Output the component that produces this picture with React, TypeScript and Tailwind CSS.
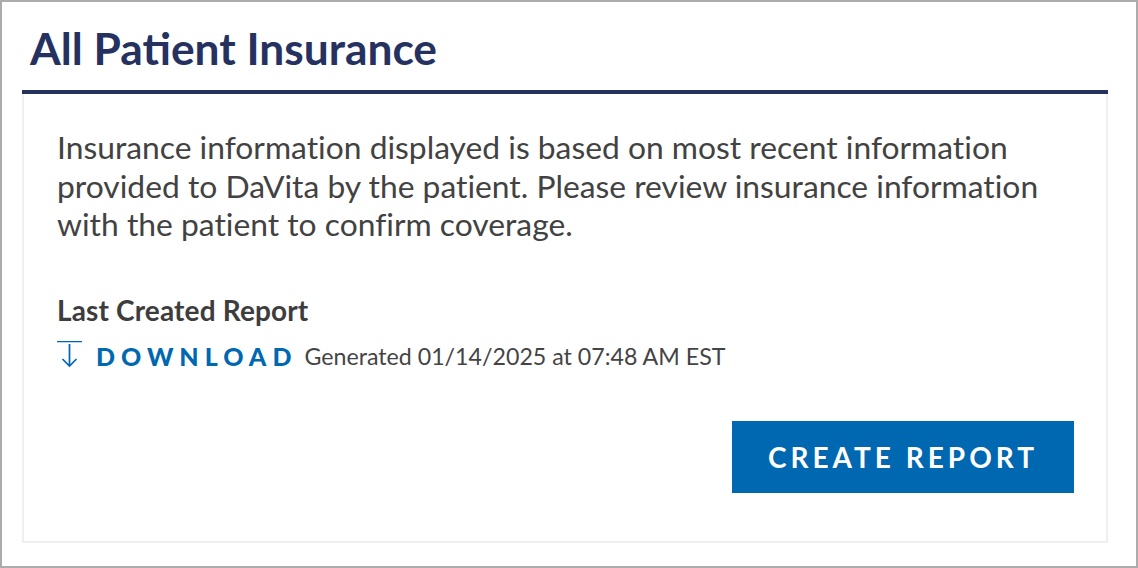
import React from "react";

function DownloadIcon() {
  return (
    <svg width="26" height="30" viewBox="0 0 26 30" fill="none" stroke="#0067b1" strokeWidth="1.75" strokeLinecap="butt">
      <line x1="0" y1="0.4" x2="25" y2="0.4" />
      <line x1="12.5" y1="3" x2="12.5" y2="24.5" />
      <polyline points="5.5,18 12.5,25 19.5,18" strokeLinejoin="miter" />
    </svg>
  );
}

export default function App() {
  return (
    <div
      className="w-[1138px] h-[568px] border-2 border-[#acacac] bg-white flex flex-col"
      style={{ fontFamily: "Lato, 'Open Sans', sans-serif" }}
    >
      <h1 className="pl-[28px] pt-[20px] h-[88px] text-[44.3px] leading-[52px] font-bold text-[#25315f]">
        All Patient Insurance
      </h1>
      <div className="ml-[20px] mr-[28px] border-t-[4px] border-[#25315f]">
        <div className="h-[449px] border-2 border-t-0 border-[#efefef] pl-[33px] pr-[32px] pt-[34px] flex flex-col">
          <p className="text-[31.8px] leading-[38.5px] text-[#424242] [font-variant-ligatures:no-common-ligatures]">
            Insurance information displayed is based on most recent information
            provided to DaVita by the patient. Please review insurance information
            with the patient to confirm coverage.
          </p>
          <div className="mt-[50px] text-[28px] leading-[32px] font-bold text-[#3d3d3d] tracking-[0.15px]">
            Last Created Report
          </div>
          <div className="mt-[14.5px] flex items-center">
            <DownloadIcon />
            <span className="ml-[13px] text-[25px] font-black text-[#0067b1] tracking-[6px] leading-[32px]">
              DOWNLOAD
            </span>
            <span className="ml-[7px] text-[23.2px] text-[#444444] leading-[32px] [font-variant-ligatures:no-common-ligatures]">
              Generated 01/14/2025 at 07:48 AM EST
            </span>
          </div>
          <div className="mt-[48.5px] flex justify-end">
            <button className="w-[342px] h-[72px] bg-[#0067b1] text-white text-[28px] font-bold tracking-[4px]">
              CREATE REPORT
            </button>
          </div>
        </div>
      </div>
    </div>
  );
}
